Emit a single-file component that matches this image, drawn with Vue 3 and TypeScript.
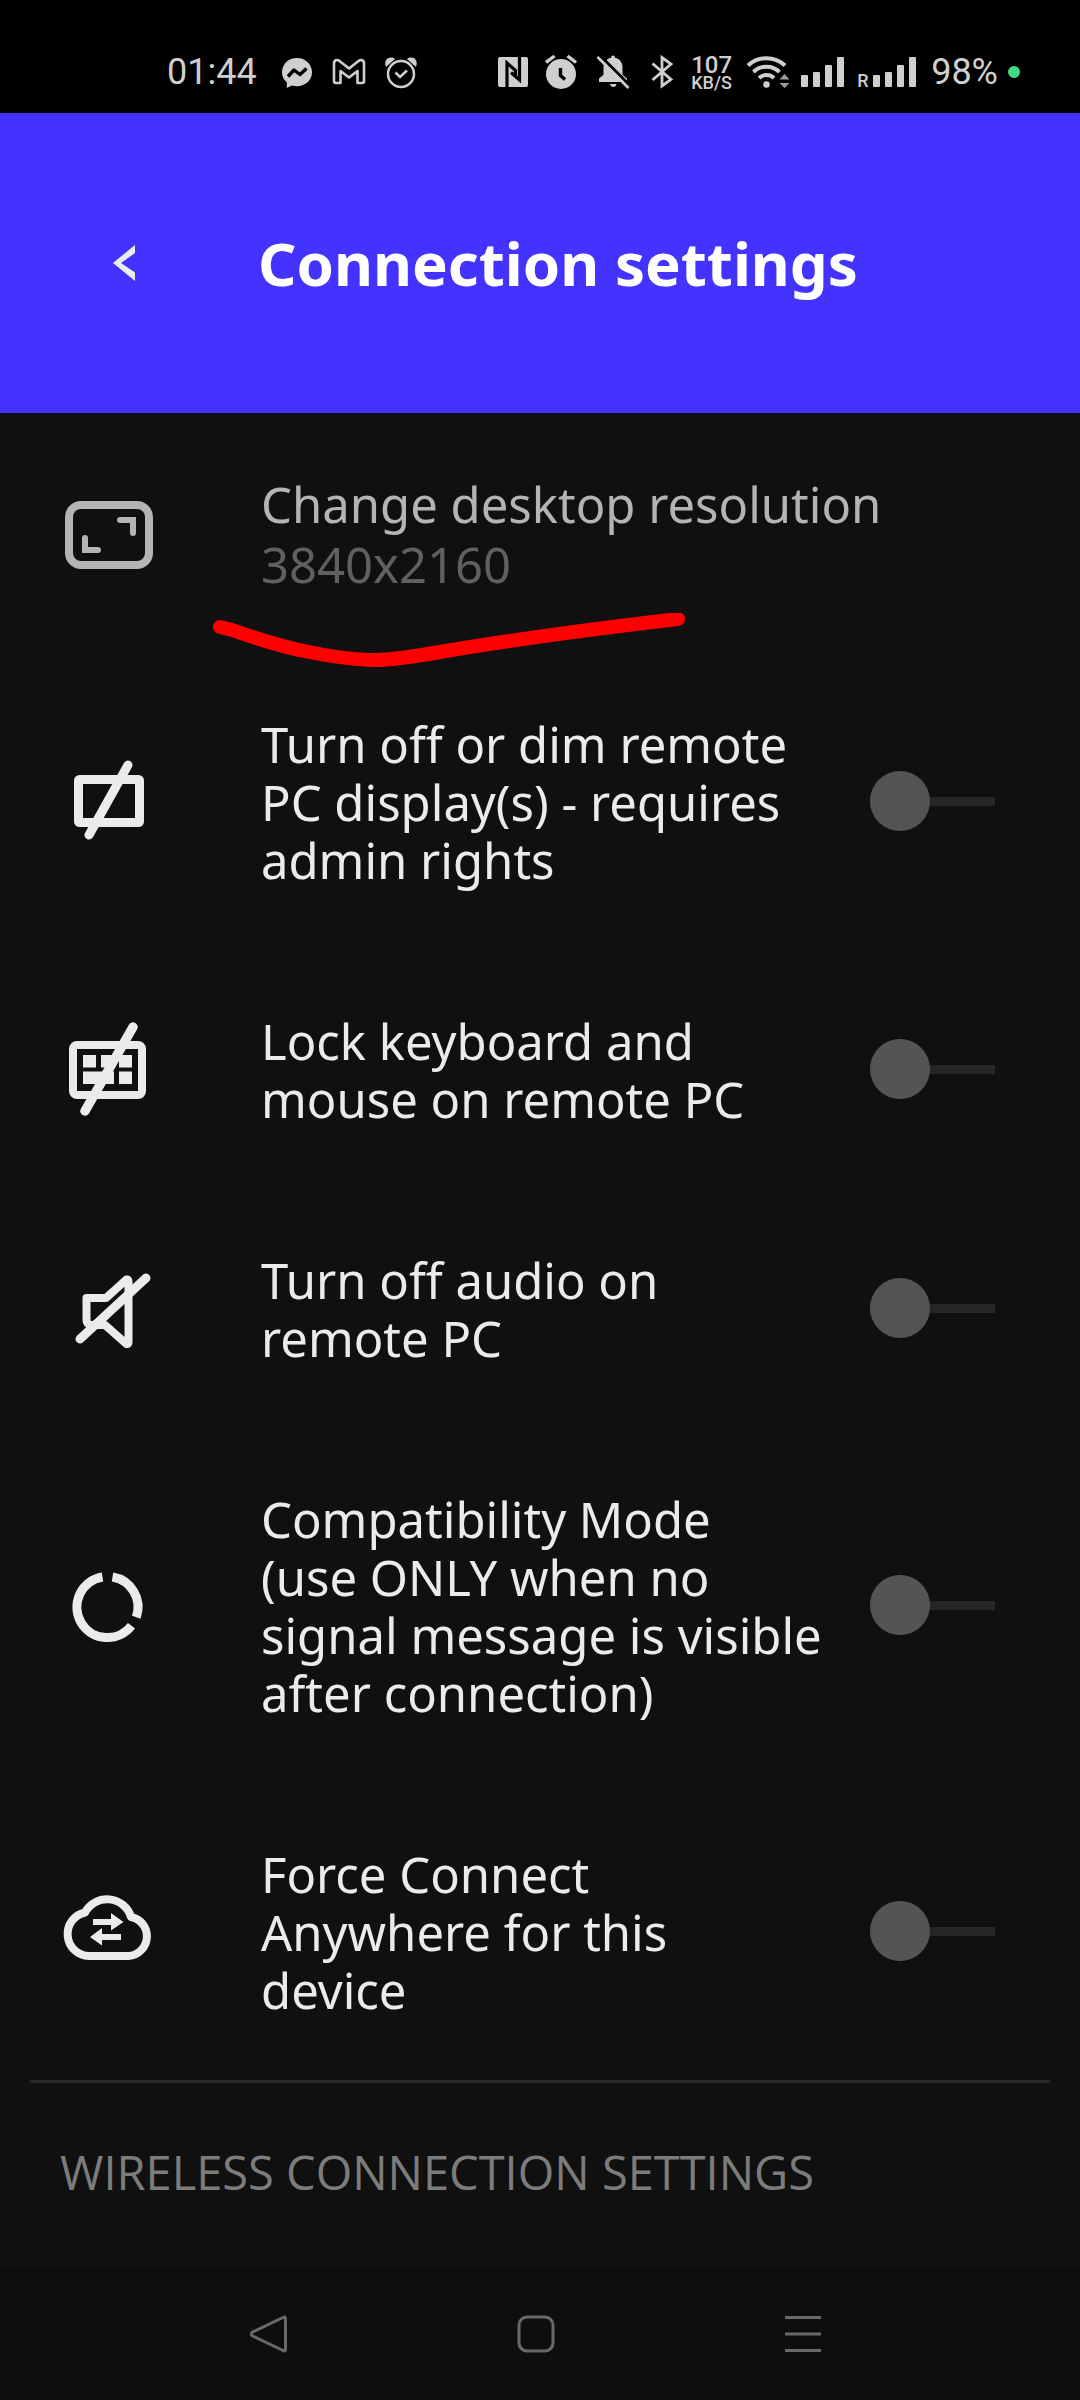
<script setup lang="ts">
import { ref } from 'vue'

type IconName = 'display' | 'keyboard' | 'audio' | 'compat' | 'cloud'

interface Setting {
  id: string
  icon: IconName
  label: string
  on: boolean
}

const settings = ref<Setting[]>([
  { id: 'dim', icon: 'display', label: 'Turn off or dim remote\nPC display(s) - requires\nadmin rights', on: false },
  { id: 'lock', icon: 'keyboard', label: 'Lock keyboard and\nmouse on remote PC', on: false },
  { id: 'mute', icon: 'audio', label: 'Turn off audio on\nremote PC', on: false },
  { id: 'compat', icon: 'compat', label: 'Compatibility Mode\n(use ONLY when no\nsignal message is visible\nafter connection)', on: false },
  { id: 'force', icon: 'cloud', label: 'Force Connect\nAnywhere for this\ndevice', on: false },
])
</script>

<template>
  <div class="screen">
    <div class="status">
      <div class="status-left">
        <span class="clock">01:44</span>
        <svg width="36" height="36" viewBox="0 0 36 36" aria-hidden="true">
          <path fill="#cfcfcf" d="M18 4C9.500 4 3 10 3 18.500c0 4 1.800 7.300 4.800 9.800V34l5-2.500c1.600.5 3.400.7 5.200.7 8.500 0 15-6 15-13.900S26.500 4 18 4z" />
          <path fill="none" stroke="#000" stroke-width="3.400" stroke-linejoin="round" d="M9 22.500l6-6.500 6 4.500 6.500-6" />
        </svg>
        <svg width="36" height="36" viewBox="0 0 36 36" aria-hidden="true">
          <path fill="none" stroke="#cfcfcf" stroke-width="2.600" stroke-linejoin="round" d="M3 9.500C3 6 6 5 8.500 7L18 14.500 27.500 7C30 5 33 6 33 9.500V27q0 2-2 2h-4.500V17L18 23.500 9.500 17v12H5q-2 0-2-2z" />
        </svg>
        <svg width="36" height="36" viewBox="0 0 36 36" fill="none" stroke="#cfcfcf" aria-hidden="true">
          <path fill="#cfcfcf" stroke="none" d="M3 13C1 8 3 3 9 3.500q2 0 3 1.500zM33 13c2-5 0-10-6-9.500q-2 0-3 1.500z" />
          <circle cx="18" cy="20" r="13" fill="#000" stroke-width="2.500" />
          <path stroke-width="2.500" d="M12.500 18.500l4.500 4.500 7-6.500" />
        </svg>
      </div>
      <div class="status-right">
        <svg width="38" height="36" viewBox="0 0 38 36" aria-hidden="true">
          <rect x="1" y="3" width="30" height="30" rx="2" fill="#cfcfcf" />
          <path fill="none" stroke="#000" stroke-width="3.200" d="M10 33V9l8.500 7.500v6M22.500 3v23L14 18.500" />
        </svg>
        <svg width="36" height="36" viewBox="0 0 36 36" aria-hidden="true">
          <circle cx="16" cy="20" r="15" fill="#cfcfcf" />
          <path fill="none" stroke="#cfcfcf" stroke-width="3.400" d="M1 8.500l8.500-6.500M22.500 2L31 8.500" />
          <path fill="none" stroke="#000" stroke-width="3.400" d="M15.500 14v7.500l4.500 4" />
        </svg>
        <svg width="40" height="36" viewBox="0 0 40 36" aria-hidden="true">
          <path fill="#cfcfcf" d="M22 1.500q2 0 2 2.300c5 1.200 7.500 5 7.500 9.500v7.500l4.500 3.700v3.500H8v-3.500l4.500-3.700v-7.500c0-4.500 2.500-8.300 7.500-9.500q0-2.300 2-2.300zM19 30h6.500q-.500 3-3.200 3t-3.300-3z" />
          <path stroke="#000" stroke-width="3" d="M8.500 1l31 31" />
          <path stroke="#cfcfcf" stroke-width="2.600" d="M6.500 3l31 31" />
        </svg>
        <svg width="40" height="36" viewBox="0 0 40 36" aria-hidden="true">
          <path fill="none" stroke="#cfcfcf" stroke-width="2.800" d="M11.500 9.500L30 25.500 21 32V3.500L30 10 11.500 26" />
        </svg>
        <div class="traffic"><span class="rate">107</span><span class="unit">KB/S</span></div>
        <svg width="48" height="36" viewBox="0 0 48 36" aria-hidden="true">
          <g fill="none" stroke="#cfcfcf" stroke-width="4">
            <path d="M7 11.500a27 27 0 0 1 37 0" />
            <path d="M12.500 18a18.500 18.500 0 0 1 26 0" />
            <path d="M18 24a11 11 0 0 1 15 0" />
          </g>
          <circle cx="25.500" cy="30.500" r="3.200" fill="#cfcfcf" />
          <path fill="#9c9c9c" d="M43.500 20l5 5.500h-10zM43.500 34l-5-5h10z" />
        </svg>
        <svg width="48" height="36" viewBox="0 0 48 36" fill="#cfcfcf" aria-hidden="true">
          <rect x="2" y="21" width="7" height="12" rx="1" />
          <rect x="14" y="18" width="7" height="15" rx="1" />
          <rect x="26" y="11" width="7" height="22" rx="1" />
          <rect x="38" y="3" width="7" height="30" rx="1" />
        </svg>
        <div class="roaming">
          <span>R</span>
          <svg width="48" height="36" viewBox="0 0 48 36" fill="#cfcfcf" aria-hidden="true">
            <rect x="0" y="21" width="7" height="12" rx="1" />
            <rect x="12" y="18" width="7" height="15" rx="1" />
            <rect x="24" y="11" width="7" height="22" rx="1" />
            <rect x="36" y="3" width="7" height="30" rx="1" />
          </svg>
        </div>
        <span class="battery">98%</span>
        <span class="dot"></span>
      </div>
    </div>

    <header class="header">
      <button class="back" type="button" aria-label="Back">
        <svg width="22" height="36" viewBox="0 0 22 36" aria-hidden="true">
          <path fill="#ececec" d="M22 0v8L8 18l14 9.500V36L0 18z" />
        </svg>
      </button>
      <h1>Connection settings</h1>
    </header>

    <main class="content">
      <div class="first">
        <button class="row resolution" type="button" disabled>
          <svg class="icon" viewBox="0 0 96 96" fill="none" stroke="#b4b4b4" aria-hidden="true">
            <rect x="8" y="20" width="80" height="60" rx="12" stroke-width="8" />
            <path stroke-width="6" stroke-linecap="round" d="M59 35h13v13M24 53v12H37" />
          </svg>
          <span class="text">
            <span class="name">Change desktop resolution</span>
            <span class="value">3840x2160</span>
          </span>
        </button>
        <svg class="scribble" width="480" height="60" viewBox="0 0 480 60" aria-hidden="true">
          <path d="M10 14L22 17Q68 33 94 38 138 47 166 47 184 47 230 39 330 22 468 6" />
        </svg>
      </div>

      <label v-for="s in settings" :key="s.id" class="row" :for="s.id">
        <svg class="icon" viewBox="0 0 96 96" fill="none" stroke="#ebebeb" stroke-linecap="round" stroke-linejoin="round" aria-hidden="true">
          <template v-if="s.icon === 'display'">
            <rect x="17.500" y="26.500" width="61" height="43" rx="1" stroke-width="9" />
            <path stroke-width="9" d="M67 12L28 82" />
          </template>
          <template v-else-if="s.icon === 'keyboard'">
            <rect x="12" y="24" width="69" height="50" rx="4" stroke-width="8" />
            <path fill="#ebebeb" stroke="none" d="M22 34h13v12.500H22zM40 34h14v12.500H40zM58 34h13v12.500H58zM22 50.500h31v12.500H22zM58 50.500h13v12.500H58z" />
            <path stroke-width="9.500" d="M72 6L24 90" />
          </template>
          <template v-else-if="s.icon === 'audio'">
            <path stroke-width="8" d="M26 38h19L65.500 19.500q2-.500 2 1.500v61.500q0 2-2 1.500L44 65H30q-4.500-1-4.500-5V38" />
            <path stroke-width="9" d="M85 18L19 79" />
          </template>
          <template v-else-if="s.icon === 'compat'">
            <path stroke-width="9" stroke-linecap="butt" d="M51.500 20A30.500 30.500 0 0 1 75.300 60.200M70.500 68.800A30.500 30.500 0 1 1 41.500 20" />
          </template>
          <template v-else>
            <path stroke-width="8" d="M28 73A22 22 0 0 1 24 29.500 25 25 0 0 1 70 34 19.700 19.700 0 0 1 67.500 73z" />
            <path fill="#ebebeb" stroke="none" d="M32 36h18v-6l12.500 9L50 47.500V42H32zM60 51H41v-6l-12 9 12 8.500V57h19z" />
          </template>
        </svg>
        <span class="text">{{ s.label }}</span>
        <input :id="s.id" v-model="s.on" class="switch" type="checkbox" role="switch" />
      </label>

      <section class="section">
        <h2>WIRELESS CONNECTION SETTINGS</h2>
      </section>
    </main>

    <nav class="nav">
      <button type="button" aria-label="Back">
        <svg width="48" height="48" viewBox="0 0 48 48">
          <path d="M38 7.500Q40.500 6 40.500 9v30q0 3-2.500 1.500L7.500 26q-2.500-2 0-4z" />
        </svg>
      </button>
      <button type="button" aria-label="Home">
        <svg width="48" height="48" viewBox="0 0 48 48">
          <rect x="7" y="7" width="34" height="34" rx="8" />
        </svg>
      </button>
      <button type="button" aria-label="Recent apps">
        <svg width="48" height="48" viewBox="0 0 48 48">
          <path d="M6 7.500h36M6 24h36M6 40.500h36" />
        </svg>
      </button>
    </nav>
  </div>
</template>

<style>
body {
  background: #101010;
}
</style>

<style scoped>
.screen {
  display: flex;
  flex-direction: column;
  min-height: 100vh;
  background: #101010;
  color: #ebebeb;
  font-family: "Noto Sans", "Open Sans", sans-serif;
}

button {
  margin: 0;
  padding: 0;
  border: 0;
  background: none;
  color: inherit;
  font: inherit;
  text-align: left;
}

svg {
  display: block;
  flex: none;
}

.status {
  box-sizing: border-box;
  display: flex;
  align-items: center;
  justify-content: space-between;
  height: 113px;
  padding: 31px 60px 0 167px;
  background: #000;
  color: #cfcfcf;
  font-family: Roboto, sans-serif;
  font-size: 36px;
  line-height: 36px;
}

.status-left {
  display: flex;
  align-items: center;
  gap: 16px;
}

.clock {
  padding-right: 6px;
}

.status-right {
  display: flex;
  align-items: center;
  gap: 10px;
}

.traffic {
  display: flex;
  flex-direction: column;
  width: 40px;
  padding-top: 4px;
  font-weight: 500;
}

.rate {
  font-size: 24px;
  line-height: 18px;
}

.unit {
  font-size: 18px;
  line-height: 18px;
}

.roaming {
  display: flex;
  align-items: flex-end;
  width: 64px;
  gap: 4px;
}

.roaming span {
  width: 12px;
  font-size: 18px;
  font-weight: 500;
  line-height: 18px;
}

.dot {
  width: 12px;
  height: 12px;
  border-radius: 50%;
  background: #3ddc84;
}

.header {
  display: flex;
  align-items: center;
  height: 300px;
  background: #4432ff;
}

.back {
  flex: none;
  width: 258px;
  padding-left: 113px;
}

.header h1 {
  margin: 0;
  color: #fff;
  font-size: 60px;
  font-weight: 700;
  line-height: 80px;
}

.content {
  flex: 1;
}

.first {
  position: relative;
}

.scribble {
  position: absolute;
  top: 200px;
  left: 210px;
  pointer-events: none;
}

.scribble path {
  fill: none;
  stroke: #f00;
  stroke-width: 14px;
  stroke-linecap: round;
  stroke-linejoin: round;
}

.row {
  box-sizing: border-box;
  display: flex;
  align-items: center;
  width: 100%;
  padding: 60px 85px 61px 61px;
  font-size: 49px;
  line-height: 58px;
}

.icon {
  width: 96px;
  height: 96px;
  margin-right: 104px;
}

.text {
  flex: 1;
  padding-top: 2px;
  white-space: pre-line;
}

.resolution {
  padding-top: 59px;
  padding-bottom: 59px;
  line-height: 60px;
}

.name,
.value {
  display: block;
}

.name {
  color: #b4b4b4;
}

.value {
  color: #606060;
}

.switch {
  flex: none;
  appearance: none;
  width: 125px;
  height: 60px;
  margin: 0;
  background: linear-gradient(#262626, #262626) center / 100% 9px no-repeat;
}

.switch::before {
  content: "";
  display: block;
  width: 60px;
  height: 60px;
  border-radius: 50%;
  background: #545454;
}

.switch:checked::before {
  margin-left: auto;
  background: #4432ff;
}

.section {
  margin: 0 30px;
  padding: 60px 30px 67px;
  border-top: 3px solid #282828;
}

.section h2 {
  margin: 0;
  color: #7c7c7c;
  font-family: "Open Sans", "Noto Sans", sans-serif;
  font-size: 47px;
  font-weight: 400;
  line-height: 58px;
}

.nav {
  box-sizing: border-box;
  display: flex;
  align-items: center;
  justify-content: space-between;
  height: 132px;
  padding: 0 253px 0 245px;
  background: #0f0d10;
}

.nav svg {
  fill: none;
  stroke: #6b686b;
  stroke-width: 3px;
}
</style>
